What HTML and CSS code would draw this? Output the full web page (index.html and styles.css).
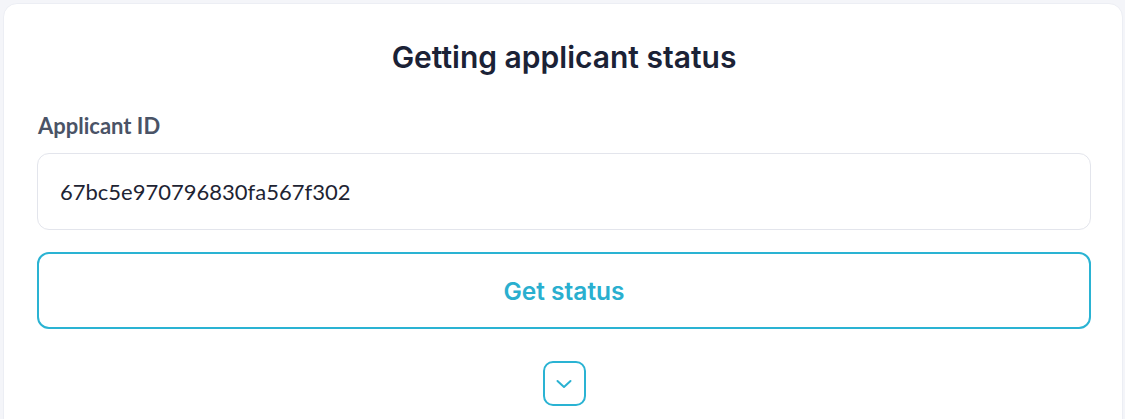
FILE: index.html
```html
<!DOCTYPE html>
<html lang="en">
<head>
<meta charset="utf-8">
<title>Getting applicant status</title>
<link rel="stylesheet" href="styles.css">
</head>
<body>
  <main class="card">
    <h1 class="title">Getting applicant status</h1>
    <label class="label" for="applicant-id">Applicant ID</label>
    <input class="input" id="applicant-id" type="text" value="67bc5e970796830fa567f302">
    <button class="btn-primary" type="button">Get status</button>
    <div class="toggle-row">
      <button class="toggle" type="button" aria-label="Expand">
        <svg width="18" height="18" viewBox="0 0 18 18" fill="none">
          <path d="M2.5 6 L9 12 L15.5 6" stroke="#2ab2d2" stroke-width="2" stroke-linecap="round" stroke-linejoin="round"/>
        </svg>
      </button>
    </div>
  </main>
</body>
</html>
```

FILE: styles.css
```css
* { box-sizing: border-box; }

html, body {
  margin: 0;
  height: 100%;
}

body {
  background: #f4f5f9;
  padding: 3px 2px 0 3px;
  overflow: hidden;
}

.card {
  background: #ffffff;
  border: 1px solid #eceef4;
  border-radius: 14px;
  padding: 35px 31px 40px 33px;
  display: flex;
  flex-direction: column;
  min-height: 440px;
}

.title {
  margin: 0;
  text-align: center;
  font-family: Inter, "Noto Sans", sans-serif;
  font-weight: 600;
  font-size: 30px;
  line-height: 36px;
  color: #1b2236;
}

.label {
  margin-top: 38px;
  font-family: Lato, "Noto Sans", sans-serif;
  font-weight: 700;
  font-size: 22px;
  line-height: 26px;
  color: #4a5366;
  padding-left: 1px;
}

.input {
  margin-top: 14px;
  height: 77px;
  width: 100%;
  border: 1px solid #e3e5ec;
  border-radius: 12px;
  padding: 0 22px;
  font-family: Lato, "Noto Sans", sans-serif;
  font-size: 22px;
  color: #1e2433;
  background: #fff;
  outline: none;
}

.btn-primary {
  margin-top: 22px;
  height: 77px;
  width: 100%;
  border: 2px solid #2ab3d3;
  border-radius: 12px;
  background: #fff;
  color: #2aafcf;
  font-family: Inter, "Noto Sans", sans-serif;
  font-weight: 600;
  font-size: 24.5px;
  cursor: pointer;
}

.toggle-row {
  margin-top: 32px;
  display: flex;
  justify-content: center;
}

.toggle {
  width: 43px;
  height: 45px;
  border: 2px solid #2ab3d3;
  border-radius: 10px;
  background: #fff;
  display: flex;
  align-items: center;
  justify-content: center;
  padding: 0;
  cursor: pointer;
}
```
